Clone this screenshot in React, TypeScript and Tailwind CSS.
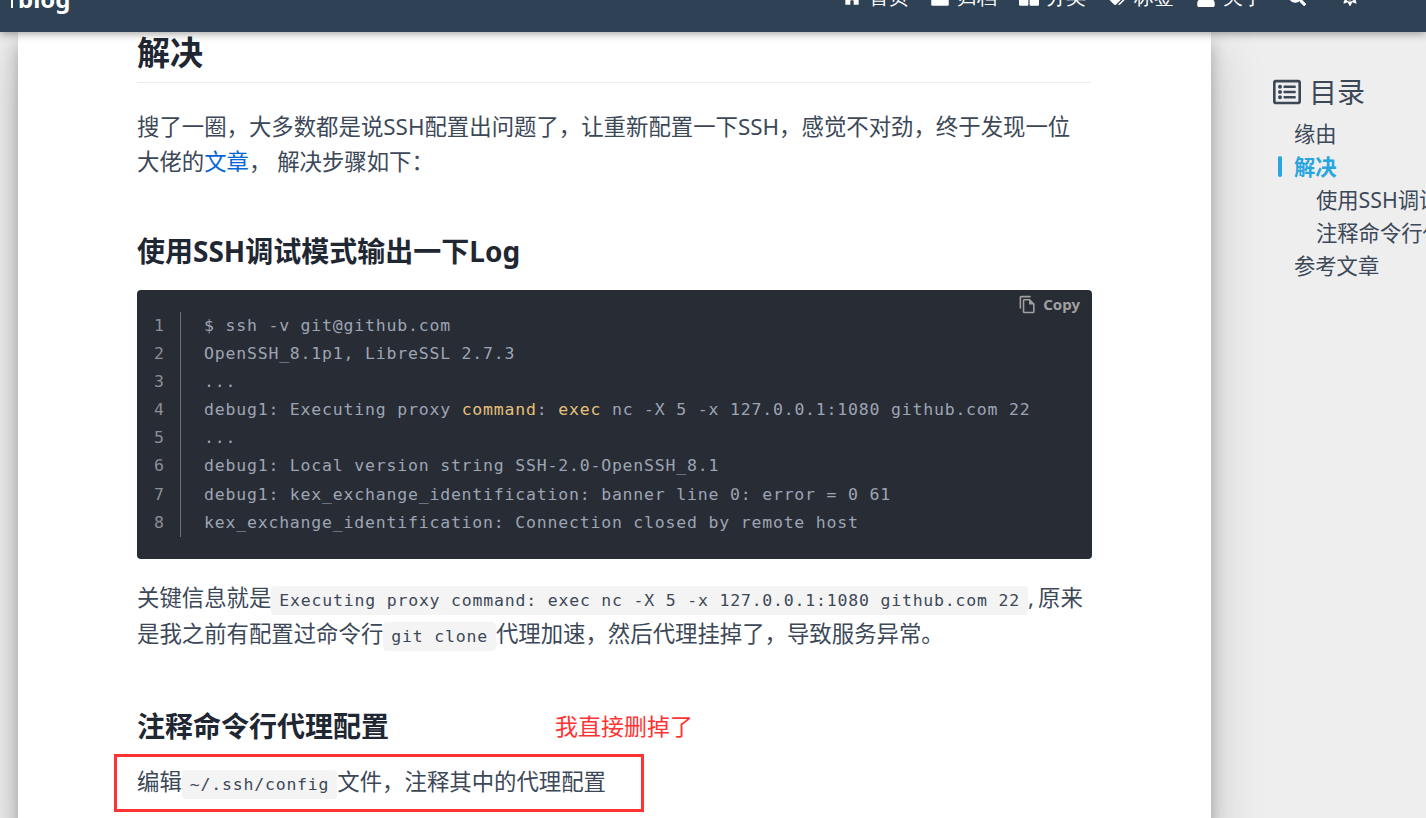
import { FaHome, FaArchive, FaThLarge, FaTags, FaUser, FaSearch, FaSun, FaRegListAlt } from "react-icons/fa";
import { MdOutlineFileCopy } from "react-icons/md";

const sans = "font-['Noto_Sans','Noto_Sans_CJK_SC',sans-serif]";
const mono = "font-['DejaVu_Sans_Mono','Noto_Sans_CJK_SC',monospace]";

const navItems = [
  { icon: FaHome, label: "首页" },
  { icon: FaArchive, label: "归档" },
  { icon: FaThLarge, label: "分类" },
  { icon: FaTags, label: "标签" },
  { icon: FaUser, label: "关于" },
];

const Code = ({ children }: { children: string }) => (
  <code className={`${mono} rounded-[4px] bg-[#f4f4f4] px-[8px] py-[5px] text-[16.5px] leading-none tracking-[0.8px] text-[#3c4858]`}>
    {children}
  </code>
);

const lines = [
  <>$ ssh -v git@github.com</>,
  <>OpenSSH_8.1p1, LibreSSL 2.7.3</>,
  <>...</>,
  <>
    debug1: Executing proxy <span className="text-[#e5c07b]">command</span>: <span className="text-[#e5c07b]">exec</span> nc -X 5 -x 127.0.0.1:1080 github.com 22
  </>,
  <>...</>,
  <>debug1: Local version string SSH-2.0-OpenSSH_8.1</>,
  <>debug1: kex_exchange_identification: banner line 0: error = 0 61</>,
  <>kex_exchange_identification: Connection closed by remote host</>,
];

const Header = () => (
  <header className="relative z-10 h-[32px] overflow-hidden bg-[#2f4154] text-white shadow-[0_2px_8px_rgba(0,0,0,0.35)]">
    <div className="-mt-[28px] flex h-[50px] items-center pr-[67px]">
      <div className="ml-[11px] mt-[3px] flex items-center gap-[5px] text-[24px] font-bold">
        <span className="-mt-[3px] h-[22px] w-[2px] bg-white" />
        blog
      </div>
      <nav className="ml-auto flex items-center text-[20px]">
        {navItems.map(({ icon: Icon, label }) => (
          <div key={label} className="mr-[21.5px] flex items-center gap-[7px]">
            <Icon className="h-[20px] w-[20px]" />
            <span>{label}</span>
          </div>
        ))}
        <FaSearch className="ml-[4px] h-[18px] w-[18px]" />
        <FaSun className="ml-[35px] h-[18px] w-[18px]" />
      </nav>
    </div>
  </header>
);

const CodeBlock = () => (
  <div className="relative mt-[19px] h-[269px] w-[955px] rounded-[4px] bg-[#282c34] pl-[17px] pt-[22px]">
    <div className={`${sans} absolute right-[12px] top-[4px] flex items-center gap-[6px] text-[15px] font-bold leading-[20px] text-[#a0a0a0]`}>
      <MdOutlineFileCopy className="h-[19px] w-[19px]" />
      Copy
    </div>
    <div className={`${mono} flex text-[16.5px] leading-[28.1px] tracking-[0.8px]`}>
      <div className="w-[27px] border-r border-[#6d7077] text-[#8b8f96]">
        {lines.map((_, i) => (
          <div key={i}>{i + 1}</div>
        ))}
      </div>
      <div className="ml-[23px] whitespace-pre text-[#9da5b4]">
        {lines.map((l, i) => (
          <div key={i}>{l}</div>
        ))}
      </div>
    </div>
  </div>
);

const Article = () => (
  <main className="ml-[18px] w-[1193px] shrink-0 bg-white pl-[119px] shadow-[0_12px_15px_0_rgba(0,0,0,0.24),0_17px_50px_0_rgba(0,0,0,0.19)]">
    <div className={`${sans} relative w-[954px] text-[22.4px] leading-[35px] text-[#3c4858]`}>
      <h2 className="flex h-[51px] items-center border-b border-[#eaecef] pb-[9px] text-[33px] font-bold text-[#1f2733]">解决</h2>
      <p className="mt-[26px]">
        搜了一圈，大多数都是说SSH配置出问题了，让重新配置一下SSH，感觉不对劲，终于发现一位大佬的
        <span className="text-[#0366d6]">文章</span>， 解决步骤如下：
      </p>
      <h3 className="mt-[52px] text-[28px] font-bold leading-[40px] text-[#1f2733]">使用SSH调试模式输出一下Log</h3>
      <CodeBlock />
      <p className="mt-[21px] leading-[36px]">
        关键信息就是<Code>Executing proxy command: exec nc -X 5 -x 127.0.0.1:1080 github.com 22</Code>
        <span className="mr-[4px]">,</span>原来是我之前有配置过命令行<Code>git clone</Code>代理加速，然后代理挂掉了，导致服务异常。
      </p>
      <h3 className="mt-[54px] text-[28px] font-bold leading-[40px] text-[#1f2733]">注释命令行代理配置</h3>
      <p className="mt-[18px] pb-[40px] leading-[36px]">
        编辑<Code>~/.ssh/config</Code>文件，注释其中的代理配置
      </p>
      <span className="absolute left-[418px] top-[678px] text-[23px] leading-[32px] text-[#ff3333]">我直接删掉了</span>
      <div className="absolute -left-[23px] top-[722px] h-[58px] w-[530px] border-[3px] border-[#ff3333]" />
    </div>
  </main>
);

const Toc = () => (
  <aside className={`${sans} ml-[62px] min-w-0 flex-1 overflow-hidden whitespace-nowrap pt-[40px] text-[21.3px] leading-[33px] text-[#3c4858]`}>
    <div className="flex items-center gap-[8px] text-[28px] leading-[40px]">
      <FaRegListAlt className="h-[28px] w-[28px]" />
      目录
    </div>
    <div className="mt-[5px] pl-[21px]">缘由</div>
    <div className="relative pl-[21px] font-bold text-[#29a5e0]">
      <span className="absolute left-[5px] top-[6px] h-[21px] w-[4px] rounded-full bg-[#29a5e0]" />
      解决
    </div>
    <div className="pl-[43px]">使用SSH调试模式输出一下Log</div>
    <div className="pl-[43px]">注释命令行代理配置</div>
    <div className="pl-[21px]">参考文章</div>
  </aside>
);

export default function App() {
  return (
    <div className="h-[818px] overflow-hidden bg-[#eeeeee]">
      <Header />
      <div className="flex">
        <Article />
        <Toc />
      </div>
    </div>
  );
}
